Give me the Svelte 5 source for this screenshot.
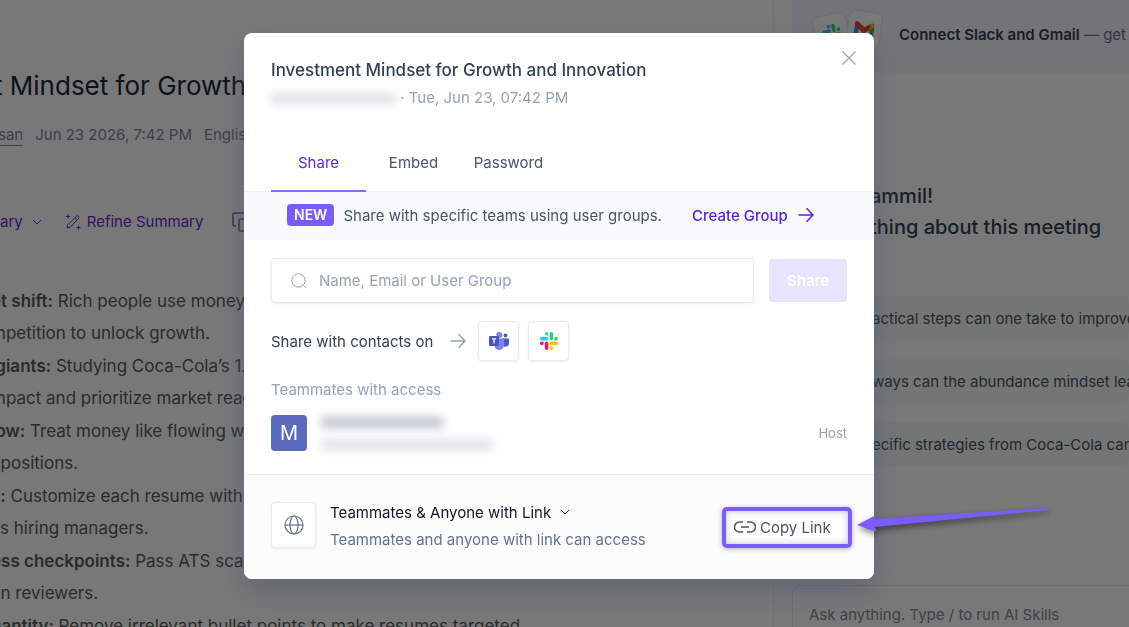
<script lang="ts">
  interface Note {
    label: string;
    text: string;
    rest: string;
  }

  const tabs = ['Share', 'Embed', 'Password'];

  const notes: Note[] = [
    { label: 'et shift:', text: 'Rich people use money', rest: 'mpetition to unlock growth.' },
    { label: ' giants:', text: 'Studying Coca-Cola’s 1.', rest: 'mpact and prioritize market read' },
    { label: 'low:', text: 'Treat money like flowing wa', rest: '  positions.' },
    { label: 's:', text: 'Customize each resume with', rest: 'ss hiring managers.' },
    { label: 'ess checkpoints:', text: 'Pass ATS scan', rest: 'an reviewers.' },
    { label: 'uantity:', text: 'Remove irrelevant bullet points to make resumes targeted', rest: '' }
  ];

  const questions = [
    'actical steps can one take to improve',
    'ways can the abundance mindset lead',
    'ecific strategies from Coca-Cola can'
  ];

  let activeTab = $state('Share');
  let query = $state('');
</script>

{#snippet arrow()}
  <svg class="arrow" viewBox="0 0 16 16" aria-hidden="true">
    <path d="M0.5 8H15M8.5 1.2 15 8l-6.5 6.8" />
  </svg>
{/snippet}

{#snippet slack()}
  <svg class="slack" viewBox="0 0 18 18" aria-hidden="true">
    <path fill="#36c5f0" d="M6.6 0a1.8 1.8 0 1 0 0 3.6h1.8V1.8A1.8 1.8 0 0 0 6.6 0ZM6.6 4.8H1.8a1.8 1.8 0 0 0 0 3.6h4.8a1.8 1.8 0 0 0 0-3.6Z" />
    <path fill="#2ed072" d="M18 6.6a1.8 1.8 0 1 0-3.6 0v1.8h1.8A1.8 1.8 0 0 0 18 6.6ZM13.2 6.6V1.8a1.8 1.8 0 0 0-3.6 0v4.8a1.8 1.8 0 0 0 3.6 0Z" />
    <path fill="#fdbf0a" d="M11.4 18a1.8 1.8 0 1 0 0-3.6H9.6v1.8a1.8 1.8 0 0 0 1.8 1.8ZM11.4 13.2h4.8a1.8 1.8 0 0 0 0-3.6h-4.8a1.8 1.8 0 0 0 0 3.6Z" />
    <path fill="#f0195e" d="M0 11.4a1.8 1.8 0 1 0 3.6 0V9.6H1.8A1.8 1.8 0 0 0 0 11.4ZM4.8 11.4v4.8a1.8 1.8 0 0 0 3.6 0v-4.8a1.8 1.8 0 0 0-3.6 0Z" />
  </svg>
{/snippet}

<div class="page">
  <main class="summary">
    <h1>t Mindset for Growth</h1>
    <div class="meta">
      <a href="#owner">san</a>
      <span>Jun 23 2026, 7:42 PM</span>
      <span>English</span>
    </div>

    <div class="toolbar">
      <button>
        ary
        <svg class="chevron" viewBox="0 0 10 10" aria-hidden="true"><path d="m1 3 4 4 4-4" /></svg>
      </button>
      <button>
        <svg class="wand" viewBox="0 0 16 16" aria-hidden="true">
          <path d="m2 14 .8-3.2L11.3 2.3a1.5 1.5 0 0 1 2.2 0 1.5 1.5 0 0 1 0 2.2L5.2 13.2 2 14ZM10 3.7l2.2 2.2M3 .5v4M1 2.5h4M13.5 11.5v4M11.5 13.5h4" />
        </svg>
        Refine Summary
      </button>
      <button class="copy" aria-label="Copy summary">
        <svg viewBox="0 0 20 20" aria-hidden="true">
          <path d="M4 14H2.5A1.5 1.5 0 0 1 1 12.5v-10A1.5 1.5 0 0 1 2.5 1h10A1.5 1.5 0 0 1 14 2.5V4M8.5 7h9A1.5 1.5 0 0 1 19 8.5v9a1.5 1.5 0 0 1-1.5 1.5h-9A1.5 1.5 0 0 1 7 17.5v-9A1.5 1.5 0 0 1 8.5 7Z" />
        </svg>
      </button>
    </div>

    <ul class="notes">
      {#each notes as note}
        <li>
          <p><strong>{note.label}</strong> {note.text}</p>
          <p>{note.rest}</p>
        </li>
      {/each}
    </ul>
  </main>

  <aside class="assistant">
    <div class="connect">
      <div class="logos">
        <span class="logo left">{@render slack()}</span>
        <span class="logo right">
          <svg class="gmail" viewBox="0 0 20 16" aria-hidden="true">
            <path fill="#4285f4" d="M0 3v11.5C0 15.3.7 16 1.5 16H4.5V6L0 3Z" />
            <path fill="#34a853" d="M20 3v11.5c0 .8-.7 1.5-1.5 1.5h-3V6L20 3Z" />
            <path fill="#fbbc04" d="M15.5 1.8V7.5L20 4V2.4c0-2-2.2-3-3.7-1.9l-.8 1.3Z" />
            <path fill="#ea4335" d="M0 2.4V4l4.5 3.5L10 11.5l5.5-4V1.2L10 5.3 4.5 1.2 3.7.5C2.2-.6 0 .5 0 2.4Z" />
          </svg>
        </span>
      </div>
      <p><b>Connect Slack and Gmail</b> — get</p>
    </div>

    <div class="greeting">
      <h2>ammil!</h2>
      <h2>thing about this meeting</h2>
    </div>

    <div class="questions">
      {#each questions as question}
        <button>{question}</button>
      {/each}
    </div>

    <textarea class="ask" aria-label="Ask anything" placeholder="Ask anything. Type / to run AI Skills"></textarea>
  </aside>
</div>

<div class="overlay">
  <div class="modal" role="dialog" aria-modal="true" aria-labelledby="share-title">
    <header>
      <div class="heading">
        <h2 id="share-title">Investment Mindset for Growth and Innovation</h2>
        <p><span class="hidden-name"></span> · Tue, Jun 23, 07:42 PM</p>
      </div>
      <button class="close" aria-label="Close">
        <svg viewBox="0 0 14 14" aria-hidden="true"><path d="m.5.5 13 13M13.5.5l-13 13" /></svg>
      </button>
    </header>

    <div class="tabs" role="tablist">
      {#each tabs as tab}
        <button
          role="tab"
          aria-selected={activeTab === tab}
          class:active={activeTab === tab}
          onclick={() => (activeTab = tab)}
        >{tab}</button>
      {/each}
    </div>

    <div class="banner">
      <span class="badge">NEW</span>
      <span>Share with specific teams using user groups.</span>
      <a href="#groups">Create Group {@render arrow()}</a>
    </div>

    <div class="body">
      <form class="invite" onsubmit={(e) => e.preventDefault()}>
        <label class="search">
          <svg viewBox="0 0 16 16" aria-hidden="true"><circle cx="7.5" cy="7.5" r="6.7" /><path d="m12.5 12.5 2.5 2.5" /></svg>
          <input type="text" bind:value={query} aria-label="Name, Email or User Group" placeholder="Name, Email or User Group" />
        </label>
        <button disabled={!query}>Share</button>
      </form>

      <div class="contacts">
        <span>Share with contacts on</span>
        {@render arrow()}
        <button aria-label="Microsoft Teams">
          <svg class="teams" viewBox="0 0 20 18" aria-hidden="true">
            <circle cx="16.5" cy="3.5" r="1.9" fill="#5059c9" />
            <circle cx="10.3" cy="3" r="3" fill="#7b83eb" />
            <path fill="#5059c9" d="M13 6.5h6.2c.5 0 .8.3.8.8V11a3.8 3.8 0 0 1-3.8 3.8H15L13 6.5Z" />
            <path fill="#7b83eb" d="M5.5 6.5h8.7c.5 0 .8.3.8.8v5.5a5 5 0 0 1-5 5.2 5 5 0 0 1-4.5-5V6.5Z" />
            <rect y="4" width="10" height="10" rx="1" fill="#4b53bc" />
            <path d="M3 6.8h4M5 6.8v4.7" stroke="#fff" stroke-width="1.2" />
          </svg>
        </button>
        <button aria-label="Slack">{@render slack()}</button>
      </div>

      <h3>Teammates with access</h3>
      <div class="member">
        <span class="avatar">M</span>
        <div class="identity">
          <span class="blurred name"></span>
          <span class="blurred email"></span>
        </div>
        <span class="role">Host</span>
      </div>
    </div>

    <footer>
      <span class="globe">
        <svg viewBox="0 0 20 20" aria-hidden="true">
          <circle cx="10" cy="10" r="9" />
          <ellipse cx="10" cy="10" rx="4" ry="9" />
          <path d="M1 10h18" />
        </svg>
      </span>
      <div class="access">
        <button>
          Teammates &amp; Anyone with Link
          <svg class="chevron" viewBox="0 0 10 10" aria-hidden="true"><path d="m1 3 4 4 4-4" /></svg>
        </button>
        <p>Teammates and anyone with link can access</p>
      </div>
      <div class="callout">
        <button>
          <svg class="link" viewBox="0 0 22 12" aria-hidden="true">
            <path d="M9 1H5.5a5 5 0 0 0 0 10H9M13 1h3.5a5 5 0 0 1 0 10H13M7 6h8" />
          </svg>
          Copy Link
        </button>
        <svg class="pointer" viewBox="0 0 196 30" aria-hidden="true">
          <path d="M1 18 20 8l-1 4L192 1v2L19 20l2 5Z" />
        </svg>
      </div>
    </footer>
  </div>
</div>

<style>
  :global(body) {
    font-family: Inter, 'Liberation Sans', sans-serif;
    font-size: 15px;
    color: #475569;
    background: #fff;
  }

  h1, h2, h3, p, ul {
    margin: 0;
    padding: 0;
    font-weight: 400;
  }

  button {
    padding: 0;
    border: 0;
    background: none;
    font: inherit;
    color: inherit;
    cursor: pointer;
  }

  svg {
    display: block;
    flex-shrink: 0;
    fill: none;
    stroke: currentColor;
  }

  /* ---- Page behind the dialog ---- */
  .page {
    display: grid;
    grid-template-columns: minmax(0, 1fr) 356px;
    height: 100vh;
    overflow: hidden;
    white-space: nowrap;
  }

  .summary {
    padding-top: 66px;
    overflow: hidden;
  }

  h1 {
    font-size: 26px;
    line-height: 40px;
    text-indent: -6px;
    color: #1e293b;
  }

  .meta {
    display: flex;
    gap: 14px;
    padding-top: 19px;
    line-height: 20px;
    text-indent: -2px;
    color: #7c889b;
  }

  .meta a {
    color: inherit;
    text-decoration: none;
    border-bottom: 1px solid currentColor;
  }

  .toolbar {
    display: flex;
    gap: 23px;
    padding-top: 63px;
    color: #6d28d9;
  }

  .toolbar button {
    display: flex;
    align-items: center;
    gap: 6px;
    line-height: 26px;
  }

  .chevron {
    width: 10px;
    height: 10px;
    margin-left: 3px;
  }

  .wand {
    width: 16px;
    height: 16px;
  }

  .toolbar .copy {
    padding-left: 6px;
    color: #64748b;
  }

  .copy svg {
    width: 20px;
    height: 20px;
    stroke-width: 1.5;
  }

  .notes {
    margin-left: -9px;
    padding-top: 50px;
    list-style: none;
    font-size: 17px;
    line-height: 32px;
    color: #5c5c5c;
  }

  .notes li {
    margin-bottom: 1px;
  }

  .notes p {
    white-space: pre;
  }

  .notes strong {
    font-weight: 600;
  }

  .assistant {
    display: flex;
    flex-direction: column;
    padding-left: 18px;
    border-left: 1px solid #f1f1f4;
    overflow: hidden;
  }

  .connect {
    display: flex;
    flex-shrink: 0;
    align-items: center;
    gap: 19px;
    height: 73px;
    padding-left: 24px;
    box-sizing: border-box;
    background: #f7f5ff;
    border-radius: 0 0 0 8px;
    color: #64748b;
  }

  .connect p {
    padding-bottom: 4px;
  }

  .connect b {
    font-weight: 600;
    color: #334155;
  }

  .logos {
    display: flex;
    padding-bottom: 10px;
  }

  .logo {
    display: grid;
    place-items: center;
    width: 32px;
    height: 36px;
    border-radius: 6px;
    background: #fff;
    box-shadow: 0 0 3px rgba(15, 23, 42, 0.15);
  }

  .logo.left {
    margin-top: 3px;
    transform: rotate(-12deg);
  }

  .logo.right {
    transform: rotate(8deg);
  }

  .gmail {
    width: 20px;
    height: 16px;
    stroke: none;
  }

  .greeting {
    padding: 108px 0 0 78px;
  }

  .greeting h2 {
    font-size: 20px;
    line-height: 31px;
    font-weight: 500;
    color: #334155;
  }

  .questions {
    display: flex;
    flex-direction: column;
    gap: 19px;
    padding-top: 53px;
  }

  .questions button {
    height: 44px;
    padding-left: 80px;
    background: #f7faf9;
    border-radius: 8px;
    text-align: left;
    color: #475569;
  }

  .ask {
    flex-shrink: 0;
    height: 100px;
    margin-top: 119px;
    padding: 18px 16px;
    box-sizing: border-box;
    border: 1px solid #e2e5ee;
    border-right: 0;
    border-radius: 8px 0 0 0;
    font: inherit;
    line-height: 22px;
    resize: none;
  }

  .ask::placeholder {
    color: #858c98;
  }

  /* ---- Dialog ---- */
  .overlay {
    position: fixed;
    inset: 0;
    display: flex;
    align-items: center;
    justify-content: center;
    padding: 0 11px 15px 0;
    background: rgba(0, 0, 0, 0.53);
  }

  .modal {
    width: 630px;
    max-width: 100%;
    background: #fff;
    border-radius: 8px;
    box-shadow: 0 12px 28px rgba(71, 85, 105, 0.5);
  }

  header {
    display: flex;
    justify-content: space-between;
    padding: 18px 18px 0 27px;
  }

  .heading {
    padding-top: 3px;
  }

  .heading h2 {
    font-size: 17px;
    line-height: 32px;
    font-weight: 500;
    color: #334155;
  }

  .heading p {
    display: flex;
    align-items: center;
    line-height: 24px;
    color: #94a3b8;
    white-space: pre;
  }

  .hidden-name {
    width: 125px;
    height: 11px;
    background: #dfe2e9;
    filter: blur(5px);
  }

  .close {
    align-self: flex-start;
    color: #94a3b8;
  }

  .close svg {
    width: 14px;
    height: 14px;
    stroke-width: 1.2;
  }

  .tabs {
    display: flex;
    padding: 25px 27px 0;
    border-bottom: 1px solid #eef1f5;
  }

  .tabs button {
    width: 95px;
    height: 57px;
    margin-bottom: -1px;
    border-bottom: 2px solid transparent;
  }

  .tabs .active {
    color: #5b2bdd;
    border-color: #8b6cf6;
  }

  .banner {
    display: flex;
    align-items: center;
    gap: 9px;
    height: 48px;
    padding: 0 43px 2px;
    box-sizing: border-box;
    background: #f8fafc;
    white-space: nowrap;
  }

  .badge {
    padding: 0 7px;
    border-radius: 4px;
    background: #7b5cfa;
    font-size: 14px;
    line-height: 22px;
    font-weight: 600;
    color: #fff;
  }

  .banner a {
    display: flex;
    align-items: center;
    gap: 10px;
    margin-left: 21px;
    color: #5b21d9;
    font-weight: 500;
    text-decoration: none;
  }

  .arrow {
    width: 16px;
    height: 16px;
    stroke-width: 1.5;
  }

  .body {
    padding: 18px 27px 23px;
  }

  .invite {
    display: flex;
    align-items: center;
    gap: 15px;
  }

  .search {
    display: flex;
    flex: 1;
    align-items: center;
    gap: 12px;
    height: 45px;
    padding: 0 19px;
    box-sizing: border-box;
  }

  .search,
  .contacts button,
  .globe {
    border: 1px solid #e8eaf0;
    border-radius: 4px;
    background: #fff;
    box-shadow: 0 1px 3px rgba(30, 41, 59, 0.08);
  }

  .search svg {
    width: 16px;
    height: 16px;
    color: #94a3b8;
  }

  .search input {
    flex: 1;
    min-width: 0;
    padding: 0;
    border: 0;
    outline: 0;
    font: inherit;
    background: none;
  }

  .search input::placeholder {
    color: #94a3b8;
  }

  .invite button {
    width: 78px;
    height: 43px;
    border-radius: 4px;
    background: #e8e3ff;
    font-weight: 600;
    color: #fff;
  }

  .contacts {
    display: flex;
    align-items: center;
    gap: 9px;
    padding-top: 18px;
    color: #334155;
  }

  .contacts .arrow {
    margin: 0 3px 0 8px;
    color: #94a3b8;
  }

  .contacts button {
    display: grid;
    place-items: center;
    width: 41px;
    height: 40px;
  }

  .slack {
    width: 18px;
    height: 18px;
    stroke: none;
  }

  .teams {
    width: 20px;
    height: 18px;
    stroke: none;
  }

  h3 {
    padding-top: 17px;
    font-size: 15px;
    line-height: 24px;
    color: #94a3b8;
  }

  .member {
    display: flex;
    align-items: center;
    gap: 14px;
    padding-top: 13px;
  }

  .avatar {
    width: 36px;
    border-radius: 4px;
    background: #5c6bc0;
    font-size: 20px;
    line-height: 36px;
    text-align: center;
    color: #fff;
  }

  .identity {
    display: grid;
    flex: 1;
    gap: 11px;
  }

  .blurred {
    height: 11px;
    filter: blur(5px);
  }

  .name {
    width: 122px;
    background: #bfc4ce;
  }

  .email {
    width: 172px;
    background: #dfe2e9;
  }

  .role {
    font-size: 13px;
    color: #94a3b8;
  }

  footer {
    display: flex;
    align-items: center;
    gap: 14px;
    height: 105px;
    padding: 0 22px 0 27px;
    box-sizing: border-box;
    border-top: 1px solid #e9ebf3;
    border-radius: 0 0 8px 8px;
    background: #fcfcfd;
  }

  .globe {
    display: grid;
    place-items: center;
    width: 43px;
    height: 44px;
    margin-bottom: 4px;
    color: #64748b;
  }

  .globe svg {
    width: 20px;
    height: 20px;
    stroke-width: 1.2;
  }

  .access {
    flex: 1;
    padding-bottom: 3px;
    line-height: 27px;
    color: #64748b;
  }

  .access button {
    display: flex;
    align-items: center;
    gap: 6px;
    color: #0f172a;
  }

  .callout {
    position: relative;
  }

  .callout button {
    display: flex;
    align-items: center;
    gap: 4px;
    width: 130px;
    height: 41px;
    padding: 0 8px;
    border: 4px solid #7b5cfa;
    border-radius: 5px;
    background: #fff;
    box-shadow: 0 1px 5px rgba(0, 0, 0, 0.3), inset 0 0 7px rgba(0, 0, 0, 0.25);
    white-space: nowrap;
  }

  .link {
    width: 22px;
    height: 12px;
    stroke-width: 1.5;
  }

  .pointer {
    position: absolute;
    left: 134px;
    top: 0;
    width: 196px;
    height: 30px;
    overflow: visible;
    fill: #7b5cfa;
    stroke: none;
    filter: drop-shadow(1px 3px 3px rgba(0, 0, 0, 0.5));
  }
</style>
